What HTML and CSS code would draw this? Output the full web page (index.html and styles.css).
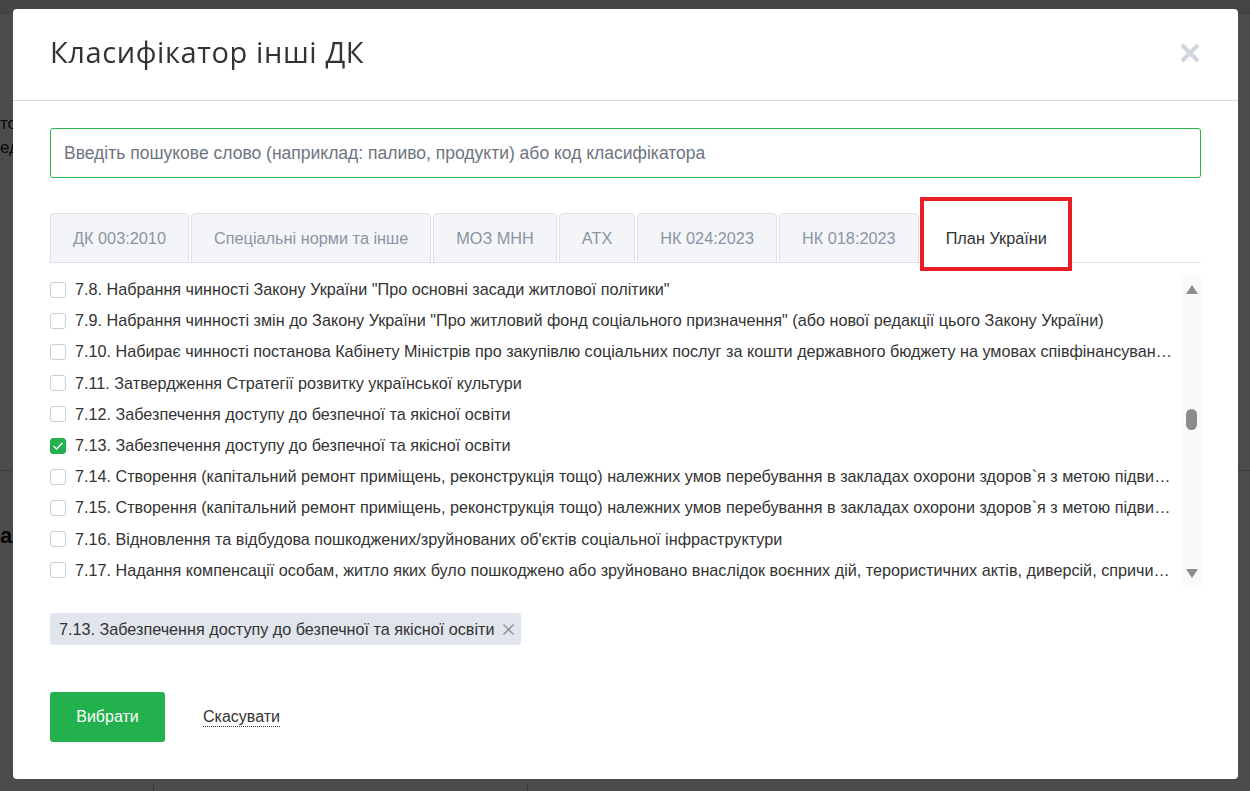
FILE: index.html
```
<!DOCTYPE html>
<html lang="uk">
<head>
    <meta charset="UTF-8">
    <title>Класифікатор інші ДК</title>
    <link rel="stylesheet" href="styles.css">
</head>
<body>
    <!-- сторінка під модальним вікном -->
    <div class="page">
        <div class="topbar"></div>
        <div class="intro">
            <p>то</p>
            <p>ед</p>
        </div>
        <hr class="page-rule">
        <h2 class="page-heading">ан</h2>
        <div class="page-row">
            <div class="cell cell-first"></div>
            <div class="cell cell-second"></div>
            <div class="cell"></div>
        </div>
    </div>

    <div class="backdrop"></div>

    <div class="modal">
        <div class="modal-header">
            <h1>Класифікатор інші ДК</h1>
            <button class="close" type="button" aria-label="Закрити">
                <svg width="20" height="20" viewBox="0 0 20 20">
                    <path d="M2 2 L18 18 M18 2 L2 18" stroke="#d1d6de" stroke-width="4"/>
                </svg>
            </button>
        </div>

        <div class="modal-body">
            <input class="search" type="text" placeholder="Введіть пошукове слово (наприклад: паливо, продукти) або код класифікатора">

            <div class="tabs-wrap">
                <ul class="tabs">
                    <li>ДК 003:2010</li>
                    <li>Спеціальні норми та інше</li>
                    <li>МОЗ МНН</li>
                    <li>АТХ</li>
                    <li>НК 024:2023</li>
                    <li>НК 018:2023</li>
                    <li class="active">План України</li>
                </ul>
                <div class="highlight"></div>
            </div>

            <div class="list-wrap">
                <ul class="list">
                    <li><span class="box"></span><span class="label">7.8. Набрання чинності Закону України "Про основні засади житлової політики"</span></li>
                    <li><span class="box"></span><span class="label">7.9. Набрання чинності змін до Закону України "Про житловий фонд соціального призначення" (або нової редакції цього Закону України)</span></li>
                    <li><span class="box"></span><span class="label">7.10. Набирає чинності постанова Кабінету Міністрів про закупівлю соціальних послуг за кошти державного бюджету на умовах співфінансування з місцевими бюджетами</span></li>
                    <li><span class="box"></span><span class="label">7.11. Затвердження Стратегії розвитку української культури</span></li>
                    <li><span class="box"></span><span class="label">7.12. Забезпечення доступу до безпечної та якісної освіти</span></li>
                    <li><span class="box checked"><svg width="16" height="16" viewBox="0 0 16 16"><path d="M3.5 8 L6.6 11 L12.5 4.8" fill="none" stroke="#fff" stroke-width="1.3"/></svg></span><span class="label">7.13. Забезпечення доступу до безпечної та якісної освіти</span></li>
                    <li><span class="box"></span><span class="label">7.14. Створення (капітальний ремонт приміщень, реконструкція тощо) належних умов перебування в закладах охорони здоров`я з метою підвищення доступності послуг</span></li>
                    <li><span class="box"></span><span class="label">7.15. Створення (капітальний ремонт приміщень, реконструкція тощо) належних умов перебування в закладах охорони здоров`я з метою підвищення якості послуг</span></li>
                    <li><span class="box"></span><span class="label">7.16. Відновлення та відбудова пошкоджених/зруйнованих об'єктів соціальної інфраструктури</span></li>
                    <li><span class="box"></span><span class="label">7.17. Надання компенсації особам, житло яких було пошкоджено або зруйновано внаслідок воєнних дій, терористичних актів, диверсій, спричинених збройною агресією</span></li>
                </ul>
                <div class="scrollbar">
                    <span class="arrow up"></span>
                    <span class="thumb"></span>
                    <span class="arrow down"></span>
                </div>
            </div>

            <div class="chips">
                <span class="chip">7.13. Забезпечення доступу до безпечної та якісної освіти
                    <svg width="11" height="11" viewBox="0 0 11 11"><path d="M0.5 0.5 L10.5 10.5 M10.5 0.5 L0.5 10.5" stroke="#8c8c8c" stroke-width="1.3"/></svg>
                </span>
            </div>

            <div class="actions">
                <button class="btn-primary" type="button">Вибрати</button>
                <a class="cancel" href="#">Скасувати</a>
            </div>
        </div>
    </div>
</body>
</html>
```

FILE: styles.css
```
body {
    margin: 0;
    background: #fff;
    font-family: "Liberation Sans", Arial, sans-serif;
    color: #333;
    overflow: hidden;
}

/* сторінка за фоном */
.page {
    height: 791px;
}

.topbar {
    height: 13px;
    background: #e6e6e6;
    border-bottom: 1px solid #d0d0d0;
}

.intro {
    margin-top: 98px;
    font-size: 17px;
    line-height: 24px;
    color: #222;
}

.intro p {
    margin: 0;
}

.page-rule {
    margin: 310px 0 0 0;
    border: none;
    border-top: 1px solid #c8c8c8;
}

.page-heading {
    margin: 53px 0 0 0;
    font-size: 22px;
    line-height: 24px;
    color: #111;
}

.page-row {
    display: flex;
    margin-top: 236px;
    height: 20px;
}

.cell {
    flex: 1;
}

.cell-first {
    flex: 0 0 153px;
    border-right: 1px solid #b8b8c0;
}

.cell-second {
    flex: 0 0 373px;
    border-right: 1px solid #b8b8c0;
}

.backdrop {
    position: fixed;
    inset: 0;
    background: rgba(0, 0, 0, 0.7);
}

/* модальне вікно */
.modal {
    position: fixed;
    left: 13px;
    top: 9px;
    width: 1225px;
    height: 770px;
    background: #fff;
    border-radius: 4px;
}

.modal-header {
    position: relative;
    padding: 26px 37px 31px;
    border-bottom: 1px solid #d5dbe3;
}

.modal-header h1 {
    margin: 0;
    font-family: "Open Sans", sans-serif;
    font-weight: 400;
    font-size: 29px;
    line-height: 34px;
    letter-spacing: 0.6px;
    color: #333;
}

.close {
    position: absolute;
    right: 38px;
    top: 34px;
    padding: 0;
    border: none;
    background: none;
    width: 20px;
    height: 20px;
}

.close svg {
    display: block;
}

.modal-body {
    padding: 27px 37px 0;
}

.search {
    display: block;
    box-sizing: border-box;
    width: 100%;
    height: 50px;
    padding: 0 13px;
    border: 1px solid #2bb24c;
    border-radius: 3px;
    font-family: "Liberation Sans", Arial, sans-serif;
    font-size: 17.5px;
    color: #333;
    outline: none;
}

.search::placeholder {
    color: #6e7580;
}

.tabs-wrap {
    position: relative;
    margin-top: 35px;
}

.tabs {
    display: flex;
    margin: 0;
    padding: 0;
    list-style: none;
    border-bottom: 1px solid #dde2e8;
}

.tabs li {
    box-sizing: border-box;
    height: 50px;
    padding: 0 22px;
    margin-right: 2px;
    margin-bottom: -1px;
    border: 1px solid #dde2e8;
    border-radius: 4px 4px 0 0;
    background: #f3f5f8;
    font-size: 16.3px;
    line-height: 48px;
    color: #8b94a3;
    white-space: nowrap;
}

.tabs li.active {
    padding: 0 24px;
    background: #fff;
    border-color: #fff;
    color: #333;
}

.highlight {
    position: absolute;
    left: 870px;
    top: -16px;
    width: 152px;
    height: 74px;
    box-sizing: border-box;
    border: 4px solid #ea1c24;
}

/* список */
.list-wrap {
    display: flex;
    margin-top: 11px;
    height: 313px;
}

.list {
    flex: 1;
    min-width: 0;
    margin: 0;
    padding: 0 6px 0 0;
    list-style: none;
    overflow: hidden;
}

.list li {
    display: flex;
    align-items: center;
    height: 31.2px;
    font-size: 16.2px;
    color: #333;
}

.box {
    flex: 0 0 auto;
    box-sizing: border-box;
    width: 16px;
    height: 16px;
    margin-right: 9px;
    border: 1px solid #c9ced7;
    border-radius: 3px;
    background: #fff;
}

.box.checked {
    border-color: #22b14c;
    background: #22b14c;
}

.box svg {
    display: block;
    margin: -1px;
}

.label {
    min-width: 0;
    white-space: nowrap;
    overflow: hidden;
    text-overflow: ellipsis;
}

.scrollbar {
    flex: 0 0 19px;
    display: flex;
    flex-direction: column;
    align-items: center;
    margin-top: 1px;
    background: #fafafa;
}

.arrow {
    width: 0;
    height: 0;
    border-left: 6px solid transparent;
    border-right: 6px solid transparent;
}

.arrow.up {
    margin-top: 10px;
    border-bottom: 9px solid #8c8c8c;
}

.arrow.down {
    margin-top: auto;
    margin-bottom: 9px;
    border-top: 9px solid #8c8c8c;
}

.thumb {
    width: 11px;
    height: 21px;
    margin-top: 115px;
    border-radius: 6px;
    background: #8c8c8c;
}

/* вибрані */
.chips {
    margin-top: 26px;
    display: flex;
}

.chip {
    display: flex;
    align-items: center;
    gap: 8px;
    height: 32px;
    padding: 0 7px 0 9px;
    border-radius: 3px;
    background: #e1e5ec;
    font-size: 16.2px;
    color: #333;
}

.actions {
    display: flex;
    align-items: center;
    gap: 38px;
    margin-top: 47px;
}

.btn-primary {
    width: 115px;
    height: 50px;
    border: none;
    border-radius: 3px;
    background: #22b14c;
    color: #fff;
    font-family: "Liberation Sans", Arial, sans-serif;
    font-size: 16px;
}

.cancel {
    color: #333;
    font-size: 16px;
    text-decoration: none;
    border-bottom: 1px dotted #333;
    line-height: 18px;
}
```
